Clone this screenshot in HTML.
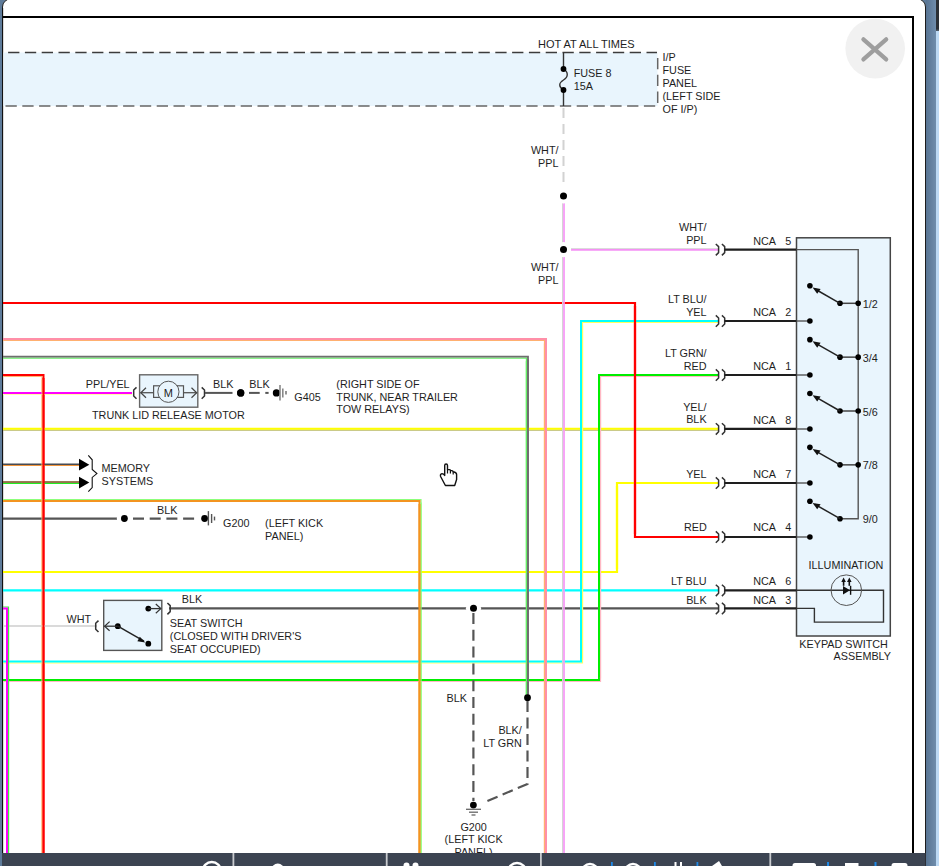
<!DOCTYPE html>
<html><head><meta charset="utf-8"><title>Wiring Diagram</title>
<style>
html,body{margin:0;padding:0;width:939px;height:866px;overflow:hidden;background:#5e7b9a;}
svg{display:block;}
text{font-family:"Liberation Sans",sans-serif;}
</style></head><body>
<svg width="939" height="866" viewBox="0 0 939 866">
<rect x="0" y="0" width="939" height="866" fill="#5e7b9a"/>
<defs><linearGradient id="rs" x1="0" x2="1" y1="0" y2="0"><stop offset="0" stop-color="#587493"/><stop offset="1" stop-color="#6f8dac"/></linearGradient><linearGradient id="tr" x1="0" x2="0" y1="0" y2="1"><stop offset="0" stop-color="#2b3036"/><stop offset="0.8" stop-color="#2b3036"/><stop offset="1" stop-color="#bcd9f4"/></linearGradient></defs>
<rect x="926" y="0" width="10" height="866" fill="url(#rs)"/>
<rect x="936" y="0" width="3" height="36" fill="url(#tr)"/>
<rect x="936" y="31" width="3" height="835" fill="#bcd9f4"/>
<path d="M2.5,880 V7 A8,8 0 0 1 10.5,-1 H917.5 A8,8 0 0 1 925.5,7 V880 Z" fill="#fff" stroke="#1c1c1c" stroke-width="1"/>
<path d="M2.5,17 H913 V866" fill="none" stroke="#000" stroke-width="2"/>
<line x1="2.6" y1="8" x2="2.6" y2="866" stroke="#111" stroke-width="1.1"/>
<rect x="3.5" y="52.5" width="654" height="53.5" fill="#e9f5fd"/>
<line x1="8.1" y1="52.5" x2="657" y2="52.5" stroke="#3c3c3c" stroke-width="1.5" stroke-dasharray="11.3 5.5"/>
<line x1="5.5" y1="106" x2="657" y2="106" stroke="#666" stroke-width="1.5" stroke-dasharray="11.3 5.5"/>
<line x1="657.7" y1="58" x2="657.7" y2="106" stroke="#666" stroke-width="1.5" stroke-dasharray="11.3 5.5"/>
<path d="M563.5,52.5 V69 C568.5,72 568.5,77 563.5,80 C558.5,83 558.5,87 563.5,90 V106" fill="none" stroke="#333" stroke-width="1.4"/>
<circle cx="563.5" cy="69" r="2.9" fill="#000"/>
<circle cx="563.5" cy="90" r="2.9" fill="#000"/>
<text x="538" y="47.6" font-size="11" fill="#1e1e1e">HOT AT ALL TIMES</text>
<text x="573.7" y="77" font-size="10.8" fill="#1e1e1e">FUSE 8</text>
<text x="573.7" y="90.2" font-size="10.8" fill="#1e1e1e">15A</text>
<text x="662.5" y="60.9" font-size="10.8" fill="#1e1e1e">I/P</text>
<text x="662.5" y="73.95" font-size="10.8" fill="#1e1e1e">FUSE</text>
<text x="662.5" y="87" font-size="10.8" fill="#1e1e1e">PANEL</text>
<text x="662.5" y="100.05" font-size="10.8" fill="#1e1e1e">(LEFT SIDE</text>
<text x="662.5" y="113.1" font-size="10.8" fill="#1e1e1e">OF I/P)</text>
<line x1="563.5" y1="108" x2="563.5" y2="188" stroke="#d2d2d2" stroke-width="2" stroke-dasharray="10 6"/>
<text x="558.5" y="153.7" text-anchor="end" font-size="10.8" fill="#1e1e1e">WHT/</text>
<text x="558.5" y="166.6" text-anchor="end" font-size="10.8" fill="#1e1e1e">PPL</text>
<text x="558.5" y="271" text-anchor="end" font-size="10.8" fill="#1e1e1e">WHT/</text>
<text x="558.5" y="283.8" text-anchor="end" font-size="10.8" fill="#1e1e1e">PPL</text>
<polyline points="562.6,196 562.6,866" fill="none" stroke="#d4d4d4" stroke-width="1.1"/>
<polyline points="564,196 564,866" fill="none" stroke="#f7a0f7" stroke-width="1.6"/>
<polyline points="571,248.6 718.5,248.6" fill="none" stroke="#d8d8d8" stroke-width="1.0"/>
<polyline points="571,249.9 718.5,249.9" fill="none" stroke="#f590f5" stroke-width="1.7"/>
<polyline points="3,303 635,303 635,537 718.5,537" fill="none" stroke="#ff0000" stroke-width="2.2"/>
<polyline points="3,340.5 544.5,340.5 544.5,866" fill="none" stroke="#ffb070" stroke-width="1.2"/>
<polyline points="3,339 546,339 546,866" fill="none" stroke="#ff8fa8" stroke-width="2"/>
<polyline points="3,358.2 526.4,358.2 526.4,697.6" fill="none" stroke="#66ee66" stroke-width="1.2"/>
<polyline points="3,356.6 528,356.6 528,697.6" fill="none" stroke="#6e6e6e" stroke-width="1.8"/>
<polyline points="3,376.5 42,376.5 42,866" fill="none" stroke="#ffb878" stroke-width="1.0"/>
<polyline points="3,375 43.5,375 43.5,866" fill="none" stroke="#ff0000" stroke-width="2"/>
<polyline points="3,394.5 132,394.5" fill="none" stroke="#ffffa8" stroke-width="1.2"/>
<polyline points="3,393 132,393" fill="none" stroke="#ff00ff" stroke-width="2"/>
<polyline points="3,430.2 718.5,430.2" fill="none" stroke="#b8b860" stroke-width="1.2"/>
<polyline points="3,428.8 718.5,428.8" fill="none" stroke="#ffff00" stroke-width="2"/>
<polyline points="3,465.5 80,465.5" fill="none" stroke="#f0943a" stroke-width="1.2"/>
<polyline points="3,464.3 80,464.3" fill="none" stroke="#474c55" stroke-width="1.4"/>
<polyline points="3,483.3 80,483.3" fill="none" stroke="#22ee22" stroke-width="1.2"/>
<polyline points="3,482 80,482" fill="none" stroke="#7d4d20" stroke-width="1.4"/>
<polyline points="3,499.5 421,499.5 421,866" fill="none" stroke="#8cff7a" stroke-width="1.2"/>
<polyline points="3,501 419.5,501 419.5,866" fill="none" stroke="#f39420" stroke-width="2"/>
<polyline points="3,518.6 117,518.6" fill="none" stroke="#555" stroke-width="2.4"/>
<line x1="133" y1="518.6" x2="197" y2="518.6" stroke="#555" stroke-width="2.4" stroke-dasharray="11 5.7"/>
<circle cx="124.4" cy="518.5" r="3.4" fill="#000"/>
<circle cx="204.6" cy="518.5" r="3.4" fill="#000"/>
<line x1="208.4" y1="511.1" x2="208.4" y2="525.4" stroke="#555" stroke-width="1.4"/>
<line x1="211.6" y1="514" x2="211.6" y2="523" stroke="#555" stroke-width="1.4"/>
<line x1="214.5" y1="516.6" x2="214.5" y2="520.4" stroke="#555" stroke-width="1.4"/>
<polyline points="3,572 617,572 617,483 718.5,483" fill="none" stroke="#ffff00" stroke-width="2.2"/>
<polyline points="3,590.4 718.5,590.4" fill="none" stroke="#00ffff" stroke-width="2.4"/>
<polyline points="3,607 8.5,607 8.5,866" fill="none" stroke="#44ee44" stroke-width="1.2"/>
<polyline points="3,608.5 7,608.5 7,866" fill="none" stroke="#ff00ff" stroke-width="2"/>
<polyline points="3,626 97,626" fill="none" stroke="#dadada" stroke-width="2"/>
<polyline points="169,608.4 718.5,608.4" fill="none" stroke="#555" stroke-width="2.4"/>
<polyline points="718.5,322.5 582.5,322.5 582.5,663 3,663" fill="none" stroke="#ffff60" stroke-width="1.2"/>
<polyline points="718.5,321 581,321 581,661.5 3,661.5" fill="none" stroke="#00ffff" stroke-width="2"/>
<polyline points="718.5,376.5 600.5,376.5 600.5,681.5 3,681.5" fill="none" stroke="#ffb8c4" stroke-width="1.2"/>
<polyline points="718.5,375 599,375 599,680 3,680" fill="none" stroke="#00ee00" stroke-width="2"/>
<line x1="562.6" y1="199" x2="562.6" y2="863" stroke="#d4d4d4" stroke-width="1.1"/>
<line x1="564" y1="199" x2="564" y2="863" stroke="#f7a0f7" stroke-width="1.6"/>
<line x1="635" y1="306" x2="635" y2="534" stroke="#ff0000" stroke-width="2.2"/>
<line x1="544.5" y1="343.5" x2="544.5" y2="863" stroke="#ffb070" stroke-width="1.2"/>
<line x1="546" y1="342" x2="546" y2="863" stroke="#ff8fa8" stroke-width="2"/>
<line x1="526.4" y1="361.2" x2="526.4" y2="694.6" stroke="#66ee66" stroke-width="1.2"/>
<line x1="528" y1="359.6" x2="528" y2="694.6" stroke="#6e6e6e" stroke-width="1.8"/>
<line x1="42" y1="379.5" x2="42" y2="863" stroke="#ffb878" stroke-width="1.0"/>
<line x1="43.5" y1="378" x2="43.5" y2="863" stroke="#ff0000" stroke-width="2"/>
<line x1="421" y1="502.5" x2="421" y2="863" stroke="#8cff7a" stroke-width="1.2"/>
<line x1="419.5" y1="504" x2="419.5" y2="863" stroke="#f39420" stroke-width="2"/>
<line x1="617" y1="569" x2="617" y2="486" stroke="#ffff00" stroke-width="2.2"/>
<line x1="8.5" y1="610" x2="8.5" y2="863" stroke="#44ee44" stroke-width="1.2"/>
<line x1="7" y1="611.5" x2="7" y2="863" stroke="#ff00ff" stroke-width="2"/>
<line x1="582.5" y1="325.5" x2="582.5" y2="660" stroke="#ffff60" stroke-width="1.2"/>
<line x1="581" y1="324" x2="581" y2="658.5" stroke="#00ffff" stroke-width="2"/>
<line x1="600.5" y1="379.5" x2="600.5" y2="678.5" stroke="#ffb8c4" stroke-width="1.2"/>
<line x1="599" y1="378" x2="599" y2="677" stroke="#00ee00" stroke-width="2"/>
<circle cx="563.5" cy="196" r="7.6" fill="#fff"/>
<circle cx="563.5" cy="249.6" r="7.6" fill="#fff"/>
<circle cx="473.5" cy="608.3" r="7.6" fill="#fff"/>
<circle cx="124.4" cy="518.5" r="7.6" fill="#fff"/>
<circle cx="240.7" cy="392.9" r="7.6" fill="#fff"/>
<circle cx="563.5" cy="196" r="3.5" fill="#000"/>
<circle cx="563.5" cy="249.6" r="3.5" fill="#000"/>
<circle cx="473.5" cy="608.3" r="3.5" fill="#000"/>
<circle cx="124.4" cy="518.5" r="3.4" fill="#000"/>
<circle cx="240.7" cy="392.9" r="3.6" fill="#000"/>
<rect x="796.5" y="237.8" width="93.8" height="398.2" fill="#e9f5fd" stroke="#444" stroke-width="1.5"/>
<path d="M715.8,244 L718.6,246.6 V252.6 L715.8,255.4" fill="none" stroke="#333" stroke-width="1.5" stroke-linejoin="round"/>
<path d="M721.9,244 L724.7,246.6 V252.6 L721.9,255.4" fill="none" stroke="#333" stroke-width="1.5" stroke-linejoin="round"/>
<line x1="724.6" y1="249.6" x2="796.5" y2="249.6" stroke="#1e1e1e" stroke-width="2.2"/>
<text x="753.2" y="244.7" font-size="10.8" fill="#1e1e1e">NCA</text>
<text x="791.3" y="244.7" text-anchor="end" font-size="10.8" fill="#1e1e1e">5</text>
<path d="M715.8,315.4 L718.6,318 V324 L715.8,326.8" fill="none" stroke="#333" stroke-width="1.5" stroke-linejoin="round"/>
<path d="M721.9,315.4 L724.7,318 V324 L721.9,326.8" fill="none" stroke="#333" stroke-width="1.5" stroke-linejoin="round"/>
<line x1="724.6" y1="321" x2="796.5" y2="321" stroke="#1e1e1e" stroke-width="2.2"/>
<text x="753.2" y="316.1" font-size="10.8" fill="#1e1e1e">NCA</text>
<text x="791.3" y="316.1" text-anchor="end" font-size="10.8" fill="#1e1e1e">2</text>
<path d="M715.8,369.4 L718.6,372 V378 L715.8,380.8" fill="none" stroke="#333" stroke-width="1.5" stroke-linejoin="round"/>
<path d="M721.9,369.4 L724.7,372 V378 L721.9,380.8" fill="none" stroke="#333" stroke-width="1.5" stroke-linejoin="round"/>
<line x1="724.6" y1="375" x2="796.5" y2="375" stroke="#1e1e1e" stroke-width="2.2"/>
<text x="753.2" y="370.1" font-size="10.8" fill="#1e1e1e">NCA</text>
<text x="791.3" y="370.1" text-anchor="end" font-size="10.8" fill="#1e1e1e">1</text>
<path d="M715.8,423.2 L718.6,425.8 V431.8 L715.8,434.6" fill="none" stroke="#333" stroke-width="1.5" stroke-linejoin="round"/>
<path d="M721.9,423.2 L724.7,425.8 V431.8 L721.9,434.6" fill="none" stroke="#333" stroke-width="1.5" stroke-linejoin="round"/>
<line x1="724.6" y1="428.8" x2="796.5" y2="428.8" stroke="#1e1e1e" stroke-width="2.2"/>
<text x="753.2" y="423.9" font-size="10.8" fill="#1e1e1e">NCA</text>
<text x="791.3" y="423.9" text-anchor="end" font-size="10.8" fill="#1e1e1e">8</text>
<path d="M715.8,477.4 L718.6,480 V486 L715.8,488.8" fill="none" stroke="#333" stroke-width="1.5" stroke-linejoin="round"/>
<path d="M721.9,477.4 L724.7,480 V486 L721.9,488.8" fill="none" stroke="#333" stroke-width="1.5" stroke-linejoin="round"/>
<line x1="724.6" y1="483" x2="796.5" y2="483" stroke="#1e1e1e" stroke-width="2.2"/>
<text x="753.2" y="478.1" font-size="10.8" fill="#1e1e1e">NCA</text>
<text x="791.3" y="478.1" text-anchor="end" font-size="10.8" fill="#1e1e1e">7</text>
<path d="M715.8,531.4 L718.6,534 V540 L715.8,542.8" fill="none" stroke="#333" stroke-width="1.5" stroke-linejoin="round"/>
<path d="M721.9,531.4 L724.7,534 V540 L721.9,542.8" fill="none" stroke="#333" stroke-width="1.5" stroke-linejoin="round"/>
<line x1="724.6" y1="537" x2="796.5" y2="537" stroke="#1e1e1e" stroke-width="2.2"/>
<text x="753.2" y="531.3" font-size="10.8" fill="#1e1e1e">NCA</text>
<text x="791.3" y="531.3" text-anchor="end" font-size="10.8" fill="#1e1e1e">4</text>
<path d="M715.8,584.7 L718.6,587.3 V593.3 L715.8,596.1" fill="none" stroke="#333" stroke-width="1.5" stroke-linejoin="round"/>
<path d="M721.9,584.7 L724.7,587.3 V593.3 L721.9,596.1" fill="none" stroke="#333" stroke-width="1.5" stroke-linejoin="round"/>
<line x1="724.6" y1="590.3" x2="796.5" y2="590.3" stroke="#1e1e1e" stroke-width="2.2"/>
<text x="753.2" y="585.4" font-size="10.8" fill="#1e1e1e">NCA</text>
<text x="791.3" y="585.4" text-anchor="end" font-size="10.8" fill="#1e1e1e">6</text>
<path d="M715.8,602.8 L718.6,605.4 V611.4 L715.8,614.2" fill="none" stroke="#333" stroke-width="1.5" stroke-linejoin="round"/>
<path d="M721.9,602.8 L724.7,605.4 V611.4 L721.9,614.2" fill="none" stroke="#333" stroke-width="1.5" stroke-linejoin="round"/>
<line x1="724.6" y1="608.4" x2="796.5" y2="608.4" stroke="#1e1e1e" stroke-width="2.2"/>
<text x="753.2" y="603.5" font-size="10.8" fill="#1e1e1e">NCA</text>
<text x="791.3" y="603.5" text-anchor="end" font-size="10.8" fill="#1e1e1e">3</text>
<polyline points="796.5,249.6 858.2,249.6 858.2,518.7 840,518.7" fill="none" stroke="#555" stroke-width="1.4"/>
<line x1="796.5" y1="321" x2="809.9" y2="321" stroke="#555" stroke-width="1.4"/>
<circle cx="809.9" cy="321" r="2.8" fill="#000"/>
<circle cx="809.9" cy="285.8" r="2.8" fill="#000"/>
<line x1="840" y1="303.3" x2="858.2" y2="303.3" stroke="#444" stroke-width="1.5"/>
<circle cx="858.2" cy="303.3" r="2.8" fill="#000"/>
<circle cx="840" cy="303.3" r="2.8" fill="#000"/>
<line x1="840" y1="303.3" x2="815" y2="289" stroke="#222" stroke-width="1.5"/>
<polygon points="812.6,287.5 820.6,288.9 817.2,293.8" fill="#111"/>
<line x1="796.5" y1="375" x2="809.9" y2="375" stroke="#555" stroke-width="1.4"/>
<circle cx="809.9" cy="375" r="2.8" fill="#000"/>
<circle cx="809.9" cy="339.65" r="2.8" fill="#000"/>
<line x1="840" y1="357.15" x2="858.2" y2="357.15" stroke="#444" stroke-width="1.5"/>
<circle cx="858.2" cy="357.15" r="2.8" fill="#000"/>
<circle cx="840" cy="357.15" r="2.8" fill="#000"/>
<line x1="840" y1="357.15" x2="815" y2="342.85" stroke="#222" stroke-width="1.5"/>
<polygon points="812.6,341.35 820.6,342.75 817.2,347.65" fill="#111"/>
<line x1="796.5" y1="429" x2="809.9" y2="429" stroke="#555" stroke-width="1.4"/>
<circle cx="809.9" cy="429" r="2.8" fill="#000"/>
<circle cx="809.9" cy="393.5" r="2.8" fill="#000"/>
<line x1="840" y1="411" x2="858.2" y2="411" stroke="#444" stroke-width="1.5"/>
<circle cx="858.2" cy="411" r="2.8" fill="#000"/>
<circle cx="840" cy="411" r="2.8" fill="#000"/>
<line x1="840" y1="411" x2="815" y2="396.7" stroke="#222" stroke-width="1.5"/>
<polygon points="812.6,395.2 820.6,396.6 817.2,401.5" fill="#111"/>
<line x1="796.5" y1="483" x2="809.9" y2="483" stroke="#555" stroke-width="1.4"/>
<circle cx="809.9" cy="483" r="2.8" fill="#000"/>
<circle cx="809.9" cy="447.35" r="2.8" fill="#000"/>
<line x1="840" y1="464.85" x2="858.2" y2="464.85" stroke="#444" stroke-width="1.5"/>
<circle cx="858.2" cy="464.85" r="2.8" fill="#000"/>
<circle cx="840" cy="464.85" r="2.8" fill="#000"/>
<line x1="840" y1="464.85" x2="815" y2="450.55" stroke="#222" stroke-width="1.5"/>
<polygon points="812.6,449.05 820.6,450.45 817.2,455.35" fill="#111"/>
<line x1="796.5" y1="537" x2="809.9" y2="537" stroke="#555" stroke-width="1.4"/>
<circle cx="809.9" cy="537" r="2.8" fill="#000"/>
<circle cx="809.9" cy="501.2" r="2.8" fill="#000"/>
<circle cx="840" cy="518.7" r="2.8" fill="#000"/>
<line x1="840" y1="518.7" x2="815" y2="504.4" stroke="#222" stroke-width="1.5"/>
<polygon points="812.6,502.9 820.6,504.3 817.2,509.2" fill="#111"/>
<text x="862.8" y="307.9" font-size="10.8" fill="#1e1e1e">1/2</text>
<text x="862.8" y="361.75" font-size="10.8" fill="#1e1e1e">3/4</text>
<text x="862.8" y="415.6" font-size="10.8" fill="#1e1e1e">5/6</text>
<text x="862.8" y="469.45" font-size="10.8" fill="#1e1e1e">7/8</text>
<text x="862.8" y="523.3" font-size="10.8" fill="#1e1e1e">9/0</text>
<text x="846" y="568.5" text-anchor="middle" font-size="10.8" fill="#1e1e1e">ILLUMINATION</text>
<polyline points="796.5,590.3 883.5,590.3 883.5,622.1 814.4,622.1 814.4,608.4 796.5,608.4" fill="none" stroke="#333" stroke-width="1.4"/>
<circle cx="846.3" cy="590.2" r="15.3" fill="none" stroke="#555" stroke-width="1"/>
<polygon points="843,586 850,590.3 843,594.6" fill="#111"/>
<line x1="850.6" y1="585.8" x2="850.6" y2="594.8" stroke="#111" stroke-width="1.4"/>
<line x1="843.6" y1="585.8" x2="843.6" y2="580.5" stroke="#111" stroke-width="1.6"/>
<polygon points="841.3,582 843.6,577.6 845.9,582" fill="#111"/>
<line x1="849.3" y1="585.8" x2="849.3" y2="580.5" stroke="#111" stroke-width="1.6"/>
<polygon points="847,582 849.3,577.6 851.6,582" fill="#111"/>
<text x="799.3" y="647.6" font-size="10.8" fill="#1e1e1e">KEYPAD SWITCH</text>
<text x="891" y="660.4" text-anchor="end" font-size="10.8" fill="#1e1e1e">ASSEMBLY</text>
<text x="706.6" y="231" text-anchor="end" font-size="10.8" fill="#1e1e1e">WHT/</text>
<text x="706.6" y="243.9" text-anchor="end" font-size="10.8" fill="#1e1e1e">PPL</text>
<text x="706.6" y="303" text-anchor="end" font-size="10.8" fill="#1e1e1e">LT BLU/</text>
<text x="706.6" y="315.7" text-anchor="end" font-size="10.8" fill="#1e1e1e">YEL</text>
<text x="706.6" y="356.8" text-anchor="end" font-size="10.8" fill="#1e1e1e">LT GRN/</text>
<text x="706.6" y="369.7" text-anchor="end" font-size="10.8" fill="#1e1e1e">RED</text>
<text x="706.6" y="410.5" text-anchor="end" font-size="10.8" fill="#1e1e1e">YEL/</text>
<text x="706.6" y="423.4" text-anchor="end" font-size="10.8" fill="#1e1e1e">BLK</text>
<text x="706.6" y="477.5" text-anchor="end" font-size="10.8" fill="#1e1e1e">YEL</text>
<text x="706.8" y="531" text-anchor="end" font-size="10.8" fill="#1e1e1e">RED</text>
<text x="706.6" y="584.8" text-anchor="end" font-size="10.8" fill="#1e1e1e">LT BLU</text>
<text x="706.6" y="603.6" text-anchor="end" font-size="10.8" fill="#1e1e1e">BLK</text>
<path d="M136.5,387.4 L133.7,390 V396 L136.5,398.8" fill="none" stroke="#333" stroke-width="1.5" stroke-linejoin="round"/>
<rect x="139.6" y="374.8" width="58.2" height="32.4" fill="#e9f5fd" stroke="#666" stroke-width="1.4"/>
<rect x="153.6" y="385.8" width="6.5" height="11.6" fill="#e9f5fd" stroke="#555" stroke-width="1.2"/>
<rect x="177" y="385.8" width="6.5" height="11.6" fill="#e9f5fd" stroke="#555" stroke-width="1.2"/>
<circle cx="168.4" cy="391.8" r="10.6" fill="#e9f5fd" stroke="#555" stroke-width="1"/>
<text x="168.4" y="397" text-anchor="middle" font-size="11" fill="#1e1e1e">M</text>
<line x1="140.5" y1="392.7" x2="153.6" y2="392.7" stroke="#555" stroke-width="1.3"/>
<line x1="183.5" y1="392.7" x2="197" y2="392.7" stroke="#555" stroke-width="1.3"/>
<polyline points="146,387.7 140.8,392.7 146,397.7" fill="none" stroke="#444" stroke-width="1.2"/>
<polyline points="191.5,387.7 196.7,392.7 191.5,397.7" fill="none" stroke="#444" stroke-width="1.2"/>
<path d="M201.7,387.4 L204.5,390 V396 L201.7,398.8" fill="none" stroke="#333" stroke-width="1.5" stroke-linejoin="round"/>
<text x="85.8" y="387.5" font-size="10.8" fill="#1e1e1e">PPL/YEL</text>
<text x="92" y="419.3" font-size="10.8" fill="#1e1e1e">TRUNK LID RELEASE MOTOR</text>
<line x1="205" y1="392.9" x2="232.5" y2="392.9" stroke="#555" stroke-width="2"/>
<circle cx="240.7" cy="392.9" r="3.6" fill="#000"/>
<line x1="249" y1="392.9" x2="259.7" y2="392.9" stroke="#555" stroke-width="2"/>
<line x1="265.3" y1="392.9" x2="268.6" y2="392.9" stroke="#555" stroke-width="2"/>
<circle cx="276.4" cy="392.9" r="3.6" fill="#000"/>
<line x1="280" y1="385.1" x2="280" y2="400.4" stroke="#888" stroke-width="1.6"/>
<line x1="282.8" y1="388.4" x2="282.8" y2="397.5" stroke="#888" stroke-width="1.6"/>
<line x1="286" y1="391" x2="286" y2="394.5" stroke="#888" stroke-width="1.8"/>
<text x="213" y="387.6" font-size="10.8" fill="#1e1e1e">BLK</text>
<text x="249.2" y="387.6" font-size="10.8" fill="#1e1e1e">BLK</text>
<text x="294.3" y="400.6" font-size="10.8" fill="#1e1e1e">G405</text>
<text x="336.3" y="388.3" font-size="10.8" fill="#1e1e1e">(RIGHT SIDE OF</text>
<text x="336.3" y="400.8" font-size="10.8" fill="#1e1e1e">TRUNK, NEAR TRAILER</text>
<text x="336.3" y="413.3" font-size="10.8" fill="#1e1e1e">TOW RELAYS)</text>
<polygon points="79,458.8 89.3,464.7 79,470.6" fill="#000"/>
<polygon points="79,476.7 89.3,482.6 79,488.5" fill="#000"/>
<polyline points="88.3,455.3 92.2,459.8 92.2,469.4 96.9,473.6 92.2,477.4 92.2,487.6 88.3,491.7" fill="none" stroke="#111" stroke-width="1.1"/>
<text x="101.6" y="472" font-size="10.8" fill="#1e1e1e">MEMORY</text>
<text x="101.6" y="484.7" font-size="10.8" fill="#1e1e1e">SYSTEMS</text>
<text x="157" y="513.7" font-size="10.8" fill="#1e1e1e">BLK</text>
<text x="223" y="527" font-size="10.8" fill="#1e1e1e">G200</text>
<text x="265.1" y="527" font-size="10.8" fill="#1e1e1e">(LEFT KICK</text>
<text x="265.1" y="539.7" font-size="10.8" fill="#1e1e1e">PANEL)</text>
<path d="M98.5,620.6 L95.7,623.2 V629.2 L98.5,632" fill="none" stroke="#333" stroke-width="1.5" stroke-linejoin="round"/>
<rect x="103.7" y="600.4" width="58.1" height="50" fill="#e9f5fd" stroke="#555" stroke-width="1.4"/>
<circle cx="148.3" cy="608.6" r="2.9" fill="#000"/>
<line x1="148.3" y1="608.6" x2="161" y2="608.6" stroke="#333" stroke-width="1.3"/>
<polyline points="155.8,604 160.8,608.6 155.8,613.2" fill="none" stroke="#333" stroke-width="1.2"/>
<path d="M167.4,603 L170.2,605.6 V611.6 L167.4,614.4" fill="none" stroke="#333" stroke-width="1.5" stroke-linejoin="round"/>
<circle cx="117.8" cy="626.2" r="2.9" fill="#000"/>
<line x1="104.5" y1="626.2" x2="117.8" y2="626.2" stroke="#333" stroke-width="1.3"/>
<polyline points="109.6,621.6 104.6,626.2 109.6,630.8" fill="none" stroke="#333" stroke-width="1.2"/>
<line x1="117.8" y1="626.2" x2="144" y2="641.2" stroke="#222" stroke-width="1.5"/>
<polygon points="145.3,642.4 137.4,641.2 139.8,636.8" fill="#111"/>
<circle cx="148.3" cy="643.7" r="2.9" fill="#000"/>
<text x="66.6" y="622.5" font-size="10.8" fill="#1e1e1e">WHT</text>
<text x="181.7" y="603.4" font-size="10.8" fill="#1e1e1e">BLK</text>
<text x="169.8" y="626.5" font-size="10.8" fill="#1e1e1e">SEAT SWITCH</text>
<text x="169.8" y="639.5" font-size="10.8" fill="#1e1e1e">(CLOSED WITH DRIVER&#39;S</text>
<text x="169.8" y="652.5" font-size="10.8" fill="#1e1e1e">SEAT OCCUPIED)</text>
<line x1="473.4" y1="613" x2="473.4" y2="801" stroke="#555" stroke-width="2.2" stroke-dasharray="11 5.8"/>
<polyline points="527.5,701 527.5,784 482.5,803" fill="none" stroke="#555" stroke-width="2.2" stroke-dasharray="11 5.5"/>
<circle cx="527.5" cy="697.7" r="3.4" fill="#000"/>
<circle cx="473.4" cy="805.1" r="3.4" fill="#000"/>
<line x1="466" y1="809.3" x2="481" y2="809.3" stroke="#666" stroke-width="1.3"/>
<line x1="469" y1="812.2" x2="478" y2="812.2" stroke="#666" stroke-width="1.3"/>
<line x1="471.5" y1="815" x2="475.5" y2="815" stroke="#666" stroke-width="1.3"/>
<text x="466.9" y="701.7" text-anchor="end" font-size="10.8" fill="#1e1e1e">BLK</text>
<text x="521.8" y="733.7" text-anchor="end" font-size="10.8" fill="#1e1e1e">BLK/</text>
<text x="521.8" y="746.7" text-anchor="end" font-size="10.8" fill="#1e1e1e">LT GRN</text>
<text x="473.6" y="830.6" text-anchor="middle" font-size="10.8" fill="#1e1e1e">G200</text>
<text x="473.6" y="843.4" text-anchor="middle" font-size="10.8" fill="#1e1e1e">(LEFT KICK</text>
<text x="473.6" y="856.2" text-anchor="middle" font-size="10.8" fill="#1e1e1e">PANEL)</text>
<circle cx="875.2" cy="48.6" r="29.8" fill="#f1f1f1"/>
<path d="M863.4,39.3 L886.2,59.4 M886.2,39.3 L863.4,59.4" stroke="#9e9e9e" stroke-width="4.2" stroke-linecap="round"/>
<path d="M444.7,475.5 V465.6 Q444.7,464 446.1,464 Q447.5,464 447.5,465.6 V469.6 H449.6 Q450.5,469.7 450.6,470.6 H451.8 Q453,470.8 453.2,471.8 Q456.6,472.6 456.6,474.6 V479.5 L454.7,485.5 H445.4 L440.6,476.5 Q439.9,474.2 442,473.6 Q443.6,473.6 444.7,475.5 Z" fill="#fff" stroke="#111" stroke-width="1.4" stroke-linejoin="round"/>
<path d="M447.5,469.6 V473.5 M450.4,470.6 V473.5 M453.2,471.8 V474.5" stroke="#111" stroke-width="1.2"/>
<rect x="2" y="853" width="923.5" height="13" fill="#3c4452"/>
<rect x="232.5" y="853" width="1.8" height="13" fill="#c9cbcf"/>
<rect x="385.8" y="853" width="1.8" height="13" fill="#c9cbcf"/>
<rect x="540" y="853" width="1.8" height="13" fill="#c9cbcf"/>
<rect x="769.4" y="853" width="1.8" height="13" fill="#c9cbcf"/>
<circle cx="211.8" cy="871" r="9" fill="none" stroke="#fff" stroke-width="2.4"/>
<circle cx="277.8" cy="870" r="6.5" fill="#fff"/>
<circle cx="406.5" cy="865.5" r="3" fill="#fff"/><circle cx="415.5" cy="865.5" r="3" fill="#fff"/>
<circle cx="517" cy="872" r="9" fill="none" stroke="#fff" stroke-width="2.4"/>
<circle cx="590" cy="872" r="8" fill="none" stroke="#fff" stroke-width="2.4"/>
<circle cx="633" cy="872" r="8" fill="none" stroke="#fff" stroke-width="2.4"/>
<rect x="611" y="862" width="1.8" height="5" fill="#1e88e5"/><rect x="654" y="862" width="1.8" height="5" fill="#1e88e5"/><rect x="696.5" y="862" width="1.8" height="5" fill="#1e88e5"/>
<rect x="674.5" y="862" width="2" height="5" fill="#fff"/><rect x="680" y="862" width="2" height="5" fill="#fff"/>
<path d="M712,866 L719,861 L722,866" fill="#fff"/>
<rect x="792.5" y="863" width="23.5" height="8" rx="2.5" fill="#fff"/>
<rect x="827" y="862" width="2" height="5" fill="#1e88e5"/>
<rect x="845" y="863" width="13.5" height="8" fill="#fff"/>
<rect x="874.5" y="862" width="2" height="5" fill="#1e88e5"/>
<rect x="891.5" y="863" width="16" height="8" rx="2.5" fill="#fff"/>
</svg>
</body></html>
